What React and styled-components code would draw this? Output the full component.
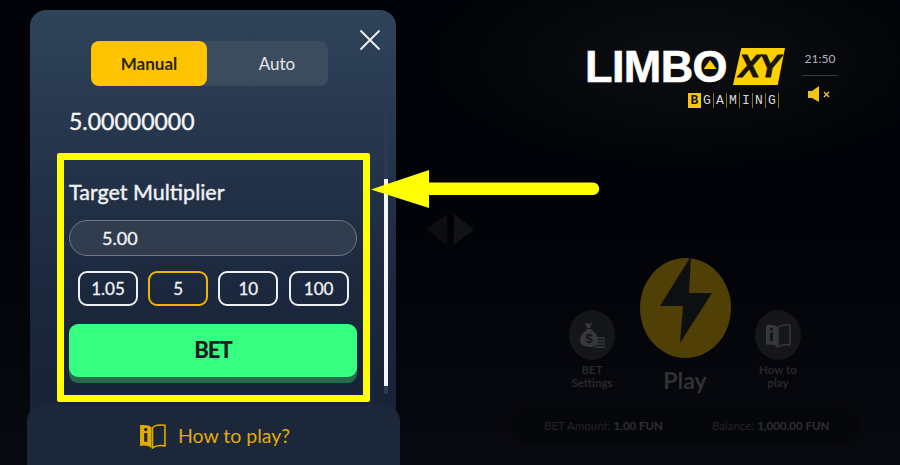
import React from "react";
import styled, { createGlobalStyle } from "styled-components";

const GlobalStyle = createGlobalStyle`
  html, body {
    margin: 0;
    padding: 0;
    background: #020308;
  }
  * {
    box-sizing: border-box;
  }
`;

const BookIcon = ({ size, color }) => (
  <svg width={size} height={size} viewBox="0 0 26 26">
    <path
      fill={color}
      fillRule="evenodd"
      d="M12 5C10 3 6 2.5 1 3V23C5 22 9 22.5 12 25ZM6.5 5.6a1.6 1.6 0 1 1 0 3.2a1.6 1.6 0 1 1 0-3.2ZM5 10.6H8V19H5Z"
    />
    <path
      fill="none"
      stroke={color}
      strokeWidth="1.5"
      d="M13 5.5C15 3.2 20 2.6 25 3.2V23C21 22.2 16 22.6 13 25Z"
    />
  </svg>
);

const BagIcon = () => (
  <svg width="30" height="30" viewBox="0 0 30 30">
    <path fill="#37383b" d="M8 3c3 1 5 1 7 0l-2 5h-3Z" />
    <path
      fill="#37383b"
      d="M10 9h4c3 3 7 6 7 11c0 5-4 7-8 7c-5 0-10-2-10-7c0-5 4-8 7-11Z"
    />
    <text x="12" y="23" textAnchor="middle" fontSize="13" fontWeight="700" fontFamily="Liberation Sans" fill="#15161a">$</text>
    <path stroke="#37383b" strokeWidth="1.5" d="M18 18h10M18 21h10M18 24h10M18 27h10" />
  </svg>
);

const App = () => (
  <>
    <GlobalStyle />
    <Screen>
      <Panel>
        <CloseButton aria-label="Close">
          <svg width="22" height="22" viewBox="0 0 22 22">
            <path d="M1.5 1.5L20.5 20.5M20.5 1.5L1.5 20.5" stroke="#f2f4f6" strokeWidth="1.8" />
          </svg>
        </CloseButton>
        <Tabs>
          <Tab $active>Manual</Tab>
          <Tab>Auto</Tab>
        </Tabs>
        <PanelBody>
          <div>
            <Payout>5.00000000</Payout>
            <Highlight>
              <Label>Target Multiplier</Label>
              <Field>5.00</Field>
              <Chips>
                <Chip>1.05</Chip>
                <Chip $active>5</Chip>
                <Chip>10</Chip>
                <Chip>100</Chip>
              </Chips>
              <BetButton>BET</BetButton>
            </Highlight>
          </div>
          <ScrollTrack>
            <ScrollThumb />
          </ScrollTrack>
        </PanelBody>
        <HelpBar>
          <BookIcon size={27} color="#e0ac00" />
          How to play?
        </HelpBar>
      </Panel>

      <Game>
        <Header>
          <Logo>
            <LogoTop>
              <LogoWord>
                LIMB<LogoO>O<LogoTriangle /></LogoO>
              </LogoWord>
              <LogoTag>XY</LogoTag>
            </LogoTop>
            <Brand>
              <BrandBadge>B</BrandBadge>
              {["G", "A", "M", "I", "N", "G"].map((letter, i) => (
                <BrandLetter key={i}>{letter}</BrandLetter>
              ))}
            </Brand>
          </Logo>
          <Status>
            <Clock>21:50</Clock>
            <StatusRule />
            <svg width="24" height="16" viewBox="0 0 24 16">
              <path fill="#f0c419" d="M0 5h4l7-5v16l-7-4H0Z" />
              <path stroke="#f0c419" strokeWidth="1.4" d="M16 6l5 5M21 6l-5 5" />
            </svg>
          </Status>
        </Header>

        <Arrows>
          <svg width="50" height="31" viewBox="0 0 50 31">
            <path fill="#0d0e10" d="M21 0V31L0 15.5Z" />
            <path fill="#121315" d="M28 0V31L48 15.5Z" />
          </svg>
        </Arrows>

        <Controls>
          <SideAction>
            <SideCircle>
              <BagIcon />
            </SideCircle>
            <SideLabel>BET<br />Settings</SideLabel>
          </SideAction>
          <PlayAction>
            <PlayCircle>
              <svg width="91" height="100" viewBox="0 0 91 100">
                <path fill="#0e0f11" d="M51-2L20 48H43L40 85L72 35H49Z" />
              </svg>
            </PlayCircle>
            <PlayLabel>Play</PlayLabel>
          </PlayAction>
          <SideAction>
            <SideCircle>
              <BookIcon size={26} color="#37383b" />
            </SideCircle>
            <SideLabel>How to<br />play</SideLabel>
          </SideAction>
        </Controls>

        <InfoBar>
          <Info>BET Amount: <b>1.00 FUN</b></Info>
          <Info>Balance: <b>1,000.00 FUN</b></Info>
        </InfoBar>
      </Game>

      <Pointer width="230" height="40" viewBox="0 0 230 40">
        <path fill="#ffff00" d="M0 19.5L58 0V12.5H222a6.2 6.2 0 0 1 0 12.5H58V38Z" />
      </Pointer>
    </Screen>
  </>
);

const Screen = styled.div`
  position: relative;
  display: flex;
  width: 900px;
  height: 465px;
  padding: 10px 0 0 30px;
  overflow: hidden;
  background: radial-gradient(ellipse 260px 110px at 690px 60px, #0d0e12 0%, rgba(13, 14, 18, 0) 100%),
    linear-gradient(180deg, #020308 50%, #090a0f 100%);
  font-family: "Lato", "Noto Sans", sans-serif;
`;

const Panel = styled.section`
  position: relative;
  flex: none;
  width: 366px;
  height: 455px;
  padding-top: 31px;
  border-radius: 16px 16px 0 0;
  background: linear-gradient(180deg, #2f435a 0%, #1c283d 60%, #162036 100%);
`;

const CloseButton = styled.button`
  position: absolute;
  top: 19px;
  right: 15px;
  display: flex;
  padding: 0;
  border: 0;
  background: none;
`;

const Tabs = styled.div`
  display: grid;
  grid-template-columns: 116px 1fr;
  width: 237px;
  height: 45px;
  margin-left: 61px;
  border-radius: 8px;
  background: #3c4b5e;
`;

const Tab = styled.div`
  display: flex;
  align-items: center;
  justify-content: center;
  padding-left: ${(p) => (p.$active ? 0 : 19)}px;
  border-radius: 8px;
  font-size: 17px;
  font-weight: ${(p) => (p.$active ? 700 : 400)};
  color: ${(p) => (p.$active ? "#2a2411" : "#e4e7ea")};
  background: ${(p) => (p.$active ? "#ffc400" : "transparent")};
`;

const PanelBody = styled.div`
  display: flex;
  align-items: flex-start;
  padding-left: 27px;
`;

const Payout = styled.div`
  height: 67px;
  padding: 20px 0 0 12px;
  font-size: 23px;
  line-height: 30px;
  -webkit-text-stroke: 0.4px #f4f5f6;
  color: #f4f5f6;
`;

const Highlight = styled.div`
  display: flex;
  flex-direction: column;
  width: 313px;
  height: 249px;
  padding: 19px 6px 0 5px;
  border: 7px solid #ffff00;
  border-radius: 2px;
`;

const Label = styled.div`
  font-size: 21.5px;
  line-height: 26px;
  -webkit-text-stroke: 0.4px #f1f2f4;
  color: #f1f2f4;
`;

const Field = styled.div`
  display: flex;
  align-items: center;
  height: 36px;
  margin-top: 15px;
  padding-left: 32px;
  border: 1px solid #6f7986;
  border-radius: 18px;
  background: #313d4f;
  font-size: 18px;
  -webkit-text-stroke: 0.3px #f4f5f6;
  color: #f4f5f6;
`;

const Chips = styled.div`
  display: flex;
  gap: 10.2px;
  margin-top: 15px;
  padding-left: 9px;
`;

const Chip = styled.div`
  display: flex;
  align-items: center;
  justify-content: center;
  width: 60px;
  height: 35px;
  border: 2px solid ${(p) => (p.$active ? "#f0b400" : "#eef0f2")};
  border-radius: 9px;
  font-size: 17px;
  -webkit-text-stroke: 0.3px #f1f2f4;
  color: #f1f2f4;
`;

const BetButton = styled.div`
  display: flex;
  align-items: center;
  justify-content: center;
  height: 53px;
  margin-top: 18px;
  padding-bottom: 2px;
  border-radius: 9px;
  background: #36ff7f;
  box-shadow: 0 6px 0 #246b4c;
  font-size: 22px;
  font-weight: 900;
  letter-spacing: -1px;
  color: #1b1c24;
`;

const ScrollTrack = styled.div`
  flex: none;
  width: 4px;
  height: 307px;
  margin: 1px 0 0 14px;
  background: #2b3a4e;
`;

const ScrollThumb = styled.div`
  height: 207px;
  margin-top: 92px;
  background: #f4f5f7;
`;

const HelpBar = styled.div`
  display: flex;
  align-items: center;
  justify-content: center;
  gap: 12px;
  width: 373px;
  height: 60px;
  margin: 3px 0 0 -3px;
  padding-left: 2px;
  border-radius: 16px 16px 0 0;
  background: #1c2739;
  font-size: 19.5px;
  color: #e0ac00;
  position: relative;
`;

const Game = styled.main`
  flex: 1;
  display: flex;
  flex-direction: column;
  padding-top: 38px;
`;

const Header = styled.header`
  display: flex;
  justify-content: flex-end;
  gap: 17px;
  height: 60px;
  padding-right: 62px;
`;

const Logo = styled.div`
  display: flex;
  flex-direction: column;
  width: 199px;
`;

const LogoTop = styled.div`
  display: flex;
  align-items: center;
  justify-content: space-between;
  height: 37px;
`;

const LogoWord = styled.div`
  flex: none;
  margin-left: -1px;
  white-space: nowrap;
  font-family: "Liberation Sans", sans-serif;
  font-size: 45px;
  line-height: 37px;
  font-weight: 700;
  letter-spacing: -0.6px;
  -webkit-text-stroke: 0.6px #fff;
  color: #fff;
`;

const LogoO = styled.span`
  position: relative;
  display: inline-block;
`;

const LogoTriangle = styled.span`
  position: absolute;
  left: 11px;
  top: 12px;
  width: 13px;
  height: 9px;
  background: #ffd000;
  clip-path: polygon(50% 0, 100% 100%, 0 100%);
`;

const LogoTag = styled.div`
  display: flex;
  flex: none;
  align-items: center;
  justify-content: center;
  width: 52px;
  height: 37px;
  background: #ffd000;
  clip-path: polygon(16% 0, 100% 0, 86% 100%, 0 100%);
  font-family: "Liberation Sans", sans-serif;
  font-size: 32px;
  font-style: italic;
  font-weight: 700;
  letter-spacing: -1px;
  -webkit-text-stroke: 1px #17150c;
  color: #17150c;
`;

const Brand = styled.div`
  display: flex;
  align-items: stretch;
  align-self: flex-end;
  height: 15px;
  margin: 8px 6px 0 0;
  font-family: "Liberation Mono", monospace;
  font-size: 13px;
  line-height: 15px;
`;

const BrandBadge = styled.span`
  width: 13px;
  background: #f5c518;
  text-align: center;
  font-weight: 700;
  color: #17150c;
`;

const BrandLetter = styled.span`
  width: 13px;
  border-right: 1px solid #8a7210;
  text-align: center;
  color: #d8d8d8;
`;

const Status = styled.div`
  display: flex;
  flex-direction: column;
  align-items: center;
  width: 36px;
`;

const Clock = styled.div`
  margin-top: 3px;
  font-size: 12px;
  line-height: 15px;
  color: #b4b5b7;
`;

const StatusRule = styled.div`
  width: 36px;
  height: 1px;
  margin: 9px 0 10px;
  background: #37383b;
`;

const Arrows = styled.div`
  display: flex;
  height: 31px;
  margin: 106px 0 0 30px;
`;

const Controls = styled.div`
  display: flex;
  gap: 7px;
  height: 135px;
  margin: 13px 0 0 156px;
`;

const SideAction = styled.div`
  display: flex;
  flex-direction: column;
  align-items: center;
  width: 80px;
  padding-top: 52px;
`;

const SideCircle = styled.div`
  display: flex;
  align-items: center;
  justify-content: center;
  width: 46px;
  height: 50px;
  border-radius: 50%;
  background: #15161a;
`;

const SideLabel = styled.div`
  margin-top: 3px;
  text-align: center;
  font-size: 11.5px;
  line-height: 13px;
  font-weight: 700;
  color: #27282b;
`;

const PlayAction = styled.div`
  display: flex;
  flex-direction: column;
  align-items: center;
  width: 92px;
`;

const PlayCircle = styled.div`
  width: 91px;
  height: 100px;
  border-radius: 50%;
  background: #504005;
  svg {
    display: block;
    overflow: visible;
  }
`;

const PlayLabel = styled.div`
  margin-top: 8px;
  font-size: 23px;
  line-height: 28px;
  font-weight: 700;
  color: #303134;
`;

const InfoBar = styled.div`
  display: flex;
  align-items: center;
  gap: 49px;
  width: 350px;
  height: 40px;
  margin: 12px 0 0 114px;
  padding-left: 34px;
  border-radius: 20px;
  background: #06070b;
`;

const Info = styled.div`
  font-size: 11.5px;
  white-space: nowrap;
  color: #232427;
  b {
    font-weight: 700;
    color: #2e2f32;
  }
`;

const Pointer = styled.svg`
  position: absolute;
  left: 371px;
  top: 170px;
`;

export default App;
